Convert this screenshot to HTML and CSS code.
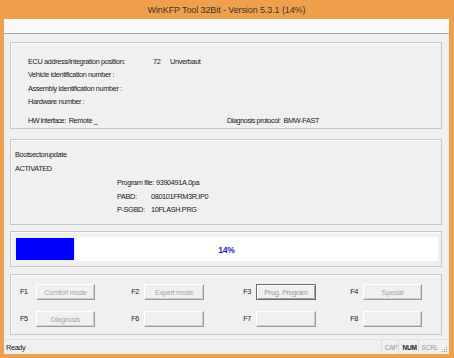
FILE: index.html
```html
<!DOCTYPE html>
<html>
<head>
<meta charset="utf-8">
<link rel="stylesheet" href="styles.css">
</head>
<body>
<div class="window">
  <div class="titlebar">WinKFP Tool 32Bit - Version 5.3.1 (14%)</div>
  <div class="client">
    <div class="toolbar"></div>
    <div class="main">
      <section class="group info">
        <div class="row ecu"><span class="lbl-ecu">ECU address/integration position:</span><span class="addr">72</span><span>Unverbaut</span></div>
        <div class="row">Vehicle identification number :</div>
        <div class="row">Assembly identification number :</div>
        <div class="row">Hardware number :</div>
        <div class="row hw">
          <span class="hw-left"><span class="hw-lbl">HW interface:</span><span>Remote _</span></span>
          <span class="proto-lbl">Diagnosis protocol:</span><span>BMW-FAST</span>
        </div>
      </section>
      <section class="group boot">
        <div class="brow">Bootsectorupdate</div>
        <div class="brow">ACTIVATED</div>
        <div class="files">
          <div class="frow r1"><span class="pf-lbl">Program file:</span><span>9390491A.0pa</span></div>
          <div class="frow r2"><span class="f-lbl">PABD:</span><span>080101FRM3R.IP0</span></div>
          <div class="frow r3"><span class="f-lbl">P-SGBD:</span><span>10FLASH.PRG</span></div>
        </div>
      </section>
      <section class="group progress">
        <div class="bar">
          <div class="fill" style="width:58px"></div>
          <span class="pct">14%</span>
        </div>
      </section>
      <section class="group keys">
        <span class="fkey first">F1</span><button class="btn">Comfort mode</button>
        <span class="fkey">F2</span><button class="btn">Expert mode</button>
        <span class="fkey">F3</span><button class="btn default">Prog. Program</button>
        <span class="fkey">F4</span><button class="btn">Special</button>
        <span class="fkey first">F5</span><button class="btn">Diagnosis</button>
        <span class="fkey">F6</span><button class="btn"></button>
        <span class="fkey">F7</span><button class="btn"></button>
        <span class="fkey">F8</span><button class="btn"></button>
      </section>
    </div>
    <div class="statusbar">
      <span class="ready">Ready</span>
      <span class="panel cap">CAP</span>
      <span class="panel num">NUM</span>
      <span class="panel scrl">SCRL</span>
      <span class="grip">
        <svg width="10" height="10" viewBox="0 0 10 10">
          <rect x="7" y="3" width="1" height="1" fill="#a0a0a0"/>
          <rect x="5" y="5" width="1" height="1" fill="#a0a0a0"/>
          <rect x="7" y="5" width="1" height="1" fill="#a0a0a0"/>
          <rect x="3" y="7" width="1" height="1" fill="#a0a0a0"/>
          <rect x="5" y="7" width="1" height="1" fill="#a0a0a0"/>
          <rect x="7" y="7" width="1" height="1" fill="#a0a0a0"/>
        </svg>
      </span>
    </div>
  </div>
</div>
</body>
</html>
```
FILE: styles.css
```css
html, body {
  margin: 0;
  padding: 0;
}
body {
  width: 454px;
  height: 358px;
  overflow: hidden;
  background: #efa04c;
  font-family: "Liberation Sans", Arial, sans-serif;
  font-size: 7.3px;
  letter-spacing: -0.35px;
  color: #202020;
}
.window {
  display: flex;
  flex-direction: column;
  height: 358px;
  padding: 0 5px 4px 4px;
  box-sizing: border-box;
}
.titlebar {
  height: 19px;
  line-height: 20px;
  text-align: center;
  font-size: 9px;
  letter-spacing: -0.1px;
  color: #3a3530;
}
.client {
  flex: 1;
  display: flex;
  flex-direction: column;
  background: #f0f0f0;
}
.toolbar {
  height: 14px;
  background: #f8f8f8;
  border-bottom: 1px solid #a9a9a9;
}
.main {
  flex: 1;
  display: flex;
  flex-direction: column;
  padding: 8px 7px 0 6px;
}
.group {
  box-sizing: border-box;
  border: 1px solid #c8c8c8;
  box-shadow: inset 1px 1px #fbfbfb;
}
/* info */
.info {
  height: 87px;
  padding: 11.5px 0 0 17px;
}
.row {
  height: 13.5px;
  line-height: 13.5px;
  display: flex;
  white-space: nowrap;
}
.lbl-ecu { width: 125px; }
.addr { width: 17px; }
.hw { margin-top: 5px; }
.hw-left {
  width: 199px;
  display: flex;
  gap: 3px;
}
.hw-lbl { letter-spacing: -0.5px; }
.proto-lbl { margin-right: 3px; letter-spacing: -0.45px; }
/* boot */
.boot {
  height: 86px;
  margin-top: 10px;
  padding: 8px 0 0 4px;
}
.brow {
  height: 14px;
  line-height: 14px;
}
.files {
  padding-left: 102px;
}
.frow {
  display: flex;
  white-space: nowrap;
  height: 13px;
  line-height: 13px;
}
.frow.r1 { height: 13.5px; line-height: 13.5px; }
.pf-lbl { width: 39px; }
.f-lbl { width: 34px; }
/* progress */
.progress {
  height: 36px;
  margin-top: 6px;
  padding: 5px 3px 5px 4px;
}
.bar {
  height: 24px;
  background: #ffffff;
  display: grid;
}
.fill {
  grid-area: 1 / 1;
  justify-self: start;
  margin: 1px;
  background: #0000ff;
  box-shadow: 0 0 1px #8080ff;
}
.pct {
  grid-area: 1 / 1;
  place-self: center;
  padding-top: 1px;
  font-weight: bold;
  font-size: 8.5px;
  letter-spacing: -0.2px;
  color: #1c1cb4;
}
/* keys */
.keys {
  height: 61px;
  margin-top: 7px;
  padding: 9px 0 7px 9px;
  display: grid;
  grid-template-columns: 16px 59px 49px 60px 52px 60px 47px 59px;
  grid-template-rows: 16px 16px;
  row-gap: 11px;
  align-items: center;
}
.fkey {
  text-align: right;
  padding-right: 5px;
  padding-bottom: 2px;
  color: #202020;
}
.fkey.first {
  text-align: left;
  padding-right: 0;
}
.btn {
  height: 16px;
  margin: 0;
  padding: 0;
  font-family: inherit;
  font-size: 7.3px;
  letter-spacing: -0.3px;
  color: #a8a8a8;
  background: #f0f0f0;
  border: 1px solid;
  border-color: #ffffff #9c9c9c #9c9c9c #ffffff;
  box-shadow: inset -1px -1px #cfcfcf;
  box-sizing: border-box;
}
.btn.default {
  border-color: #6e6e6e;
  box-shadow: inset 1px 1px #ffffff, inset -1px -1px #a0a0a0;
  color: #9a9a9a;
}
/* status */
.statusbar {
  height: 14px;
  border-top: 1px solid #e2e2e2;
  display: flex;
  align-items: stretch;
  line-height: 16px;
  white-space: nowrap;
}
.ready {
  flex: 1;
  padding-left: 2px;
  color: #151515;
}
.panel {
  padding: 0 1px 0 3px;
  border-left: 1px solid #dcdcdc;
  color: #9a9a9a;
  font-size: 6.6px;
  letter-spacing: -0.3px;
}
.num { color: #202020; font-weight: bold; }
.grip {
  width: 10px;
  display: flex;
  align-items: flex-end;
  justify-content: flex-end;
}
.grip svg { display: block; }
```
